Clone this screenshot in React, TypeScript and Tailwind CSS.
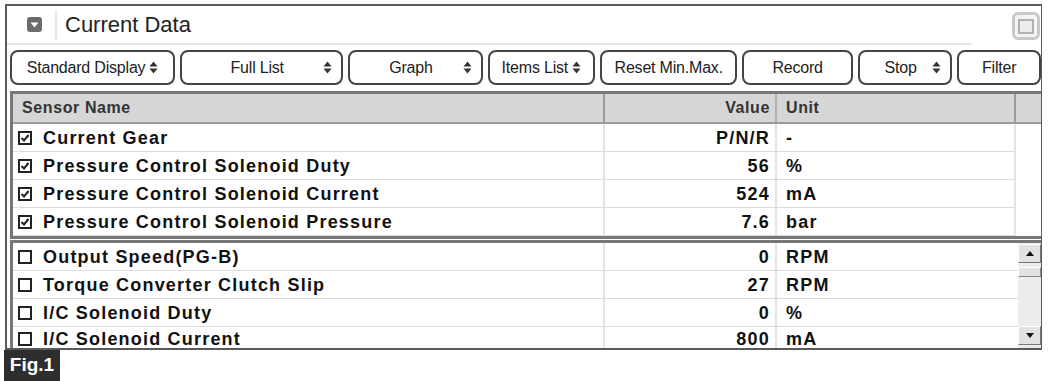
const Updown = () => (
  <svg width="9" height="13" viewBox="0 0 9 13" className="shrink-0">
    <path d="M4.5 0.5 L8.5 5.5 H0.5 Z" fill="#333" />
    <path d="M0.5 7.5 H8.5 L4.5 12.5 Z" fill="#333" />
  </svg>
);

const Check = ({ on }: { on: boolean }) => (
  <svg width="14" height="14" viewBox="0 0 14 14" className="shrink-0">
    <rect x="1" y="1" width="12" height="12" fill="white" stroke="#222" strokeWidth="2" />
    {on && <path d="M3.5 7 L6 9.5 L10.5 4" fill="none" stroke="#222" strokeWidth="2" />}
  </svg>
);

const buttons = [
  { label: "Standard Display", w: "w-[166px]", arrow: true, spread: false },
  { label: "Full List", w: "w-[164px]", arrow: true, spread: true },
  { label: "Graph", w: "w-[135px]", arrow: true, spread: true },
  { label: "Items List", w: "w-[108px]", arrow: true, spread: false },
  { label: "Reset Min.Max.", w: "w-[138px]", arrow: false, spread: false },
  { label: "Record", w: "w-[111px]", arrow: false, spread: false },
  { label: "Stop", w: "w-[95px]", arrow: true, spread: true },
  { label: "Filter", w: "w-[84px]", arrow: false, spread: false },
];

const topRows = [
  { name: "Current Gear", value: "P/N/R", unit: "-" },
  { name: "Pressure Control Solenoid Duty", value: "56", unit: "%" },
  { name: "Pressure Control Solenoid Current", value: "524", unit: "mA" },
  { name: "Pressure Control Solenoid Pressure", value: "7.6", unit: "bar" },
];

const bottomRows = [
  { name: "Output Speed(PG-B)", value: "0", unit: "RPM" },
  { name: "Torque Converter Clutch Slip", value: "27", unit: "RPM" },
  { name: "I/C Solenoid Duty", value: "0", unit: "%" },
  { name: "I/C Solenoid Current", value: "800", unit: "mA" },
];

const Row = ({ r, on, last }: { r: { name: string; value: string; unit: string }; on: boolean; last?: boolean }) => (
  <div
    className={`flex text-[18px] leading-[22px] font-bold text-[#111] tracking-[1.2px] ${
      last ? "h-[24px] items-start" : "h-[28px] border-b border-[#dcdcdc] items-center"
    }`}
  >
    <div className="w-[592px] h-full flex items-center gap-[11px] pl-[5px] border-r-2 border-[#e4e4e4]">
      <Check on={on} />
      <span>{r.name}</span>
    </div>
    <div className="w-[172px] h-full flex items-center justify-end pr-[5px] border-r-2 border-[#e4e4e4]">{r.value}</div>
    <div className="flex-1 h-full flex items-center pl-[9px]">{r.unit}</div>
  </div>
);

export default function App() {
  return (
    <div className="w-[1050px] h-[381px] bg-white relative overflow-hidden font-['Liberation_Sans',Arial,sans-serif]">
      <div className="ml-[5px] mt-[4px] w-[1037px] h-[346px] border-2 border-[#5a5a5a] border-r-[1px] flex flex-col">
        {/* title */}
        <div className="flex h-[39px]">
          <div className="flex-1 flex items-center border-b-2 border-[#e6e6e6] mr-[40px]">
            <div className="ml-[20px] w-[15px] h-[15px] rounded-[3px] bg-[#6b6b6b] flex items-center justify-center">
              <svg width="9" height="6" viewBox="0 0 9 6"><path d="M0.5 0.5 H8.5 L4.5 5.5 Z" fill="white" /></svg>
            </div>
            <div className="ml-[13px] w-[2px] h-[30px] bg-[#e6e6e6]" />
            <span className="ml-[8px] text-[22px] text-[#222]">Current Data</span>
          </div>
          <div className="mt-[6px] mr-[1px] w-[28px] h-[28px] rounded-[6px] border-[3px] border-[#c8c8c8] bg-[#f4f4f4] flex items-center justify-center">
            <div className="w-[16px] h-[15px] border-2 border-[#b0b0b0] bg-[#ececec]" />
          </div>
        </div>
        {/* buttons */}
        <div className="flex gap-[5px] ml-[3px] mt-[5px] h-[35px]">
          {buttons.map((b) => (
            <div
              key={b.label}
              className={`${b.w} h-full rounded-[8px] border-2 border-[#444] bg-white flex items-center text-[16px] tracking-[-0.2px] text-[#222] px-[9px] ${
                b.arrow ? (b.spread ? "justify-between" : "justify-center gap-[4px]") : "justify-center"
              }`}
            >
              {b.spread ? <span className="flex-1 text-center">{b.label}</span> : <span>{b.label}</span>}
              {b.arrow && <Updown />}
            </div>
          ))}
        </div>
        {/* upper table */}
        <div className="ml-[3px] mt-[6px] border-[3px] border-[#777] border-r-0">
          <div className="flex h-[30px] bg-[#d6d6d6] text-[16px] font-bold text-[#333] tracking-[0.6px] border-b-2 border-[#9a9a9a]">
            <div className="w-[592px] flex items-center pl-[9px] border-r-2 border-[#9a9a9a]">Sensor Name</div>
            <div className="w-[172px] flex items-center justify-end pr-[5px] border-r-2 border-[#b0b0b0]">Value</div>
            <div className="w-[239px] flex items-center pl-[9px] border-r-2 border-[#9a9a9a]">Unit</div>
            <div className="flex-1" />
          </div>
          <div className="flex">
            <div className="w-[1003px] border-r-2 border-[#e4e4e4]">
              {topRows.map((r) => (
                <Row key={r.name} r={r} on />
              ))}
            </div>
            <div className="flex-1" />
          </div>
        </div>
        {/* lower table */}
        <div className="ml-[3px] mt-[1px] flex-1 border-t-[3px] border-l-[3px] border-[#777] flex overflow-hidden">
          <div className="w-[1005px]">
            {bottomRows.map((r, i) => (
              <Row key={r.name} r={r} on={false} last={i === bottomRows.length - 1} />
            ))}
          </div>
          <div className="flex-1 bg-[#ececec] flex flex-col pt-[1px] pb-[3px]">
            <div className="h-[19px] border border-[#777] border-t-white border-l-white bg-[#e2e2e2] flex items-center justify-center">
              <svg width="8" height="5" viewBox="0 0 8 5"><path d="M4 0 L8 5 H0 Z" fill="#111" /></svg>
            </div>
            <div className="mt-[4px] h-[10px] border border-[#888] border-t-white border-l-white bg-[#e2e2e2]" />
            <div className="flex-1" />
            <div className="h-[19px] border border-[#777] border-t-white border-l-white bg-[#e2e2e2] flex items-center justify-center">
              <svg width="8" height="5" viewBox="0 0 8 5"><path d="M0 0 H8 L4 5 Z" fill="#111" /></svg>
            </div>
          </div>
        </div>
      </div>
      <div className="ml-[4px] w-[56px] h-[31px] bg-[#2e2e2e] text-white font-bold text-[19px] flex items-center justify-center">
        Fig.1
      </div>
    </div>
  );
}
